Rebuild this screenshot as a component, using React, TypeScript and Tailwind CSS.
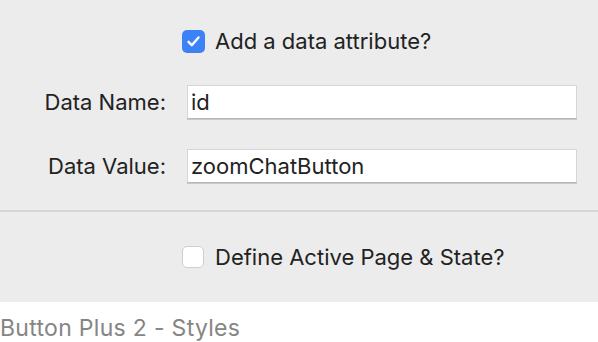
import React from "react";

export default function App() {
  const font = { fontFamily: "Inter, 'Liberation Sans', sans-serif" };
  return (
    <div className="w-[598px] h-[342px] bg-white overflow-hidden" style={font}>
      <div className="h-[302px] bg-[#ececec] flex flex-col">
        <div className="flex items-center pl-[182px] pt-[29px] h-[53px]">
          <div className="w-[23px] h-[23px] rounded-[5px] bg-[#3b82f7] flex items-center justify-center">
            <svg width="15" height="15" viewBox="0 0 15 15">
              <path d="M2.5 7.8 L5.8 11.2 L12.5 3.5" fill="none" stroke="white" strokeWidth="2.4" strokeLinecap="round" strokeLinejoin="round" />
            </svg>
          </div>
          <span className="ml-[10px] text-[22px] text-[#222]">Add a data attribute?</span>
        </div>
        <div className="flex items-center mt-[32px] h-[34px]">
          <div className="w-[166px] text-right text-[22px] text-[#222]">Data Name:</div>
          <div className="ml-[21px] w-[390px] h-[34px] bg-white border border-[#d6d6d6] border-b-[#b8b8b8] shadow-[0_1px_0_#c8c8c8] flex items-center px-[3px] text-[22px] text-[#222]">id</div>
        </div>
        <div className="flex items-center mt-[30px] h-[34px]">
          <div className="w-[166px] text-right text-[22px] text-[#222]">Data Value:</div>
          <div className="ml-[21px] w-[390px] h-[34px] bg-white border border-[#d6d6d6] border-b-[#b8b8b8] shadow-[0_1px_0_#c8c8c8] flex items-center px-[3px] text-[22px] text-[#222]">zoomChatButton</div>
        </div>
        <div className="mt-[27px] h-[2px] bg-[#d6d6d6]" />
        <div className="flex items-center pl-[182px] mt-[34px] h-[22px]">
          <div className="w-[22px] h-[22px] rounded-[5px] bg-white border border-[#cfcfcf]" />
          <span className="ml-[11px] text-[22px] text-[#222]">Define Active Page &amp; State?</span>
        </div>
      </div>
      <div className="pt-[12px] text-[23px] text-[#858585] leading-[28px] tracking-[0.3px]">Button Plus 2 - Styles</div>
    </div>
  );
}
